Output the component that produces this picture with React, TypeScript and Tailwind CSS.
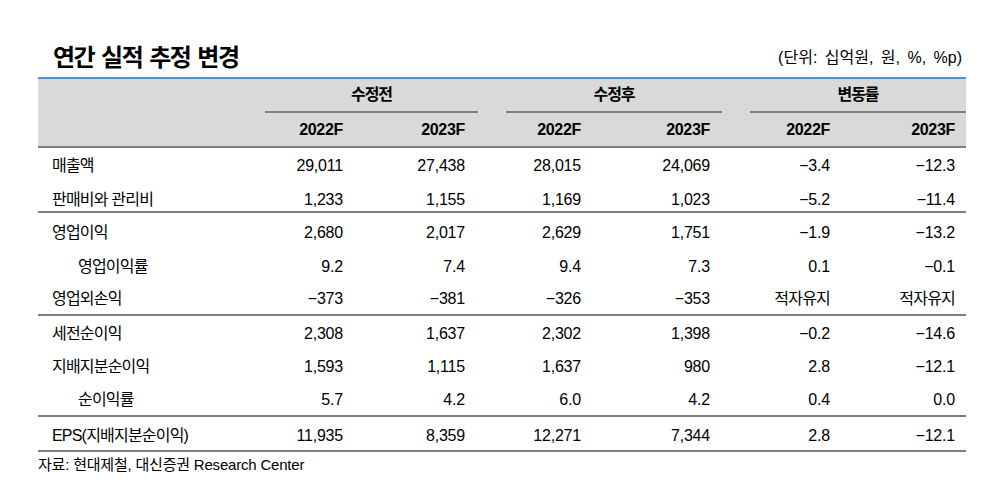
import React from 'react'

type Row = {
  label: string
  values: string[]
  indent?: boolean
  h: string
  pt: string
}

type Section = Row[]

const sections: Section[] = [
  [
    { label: '매출액', values: ['29,011', '27,438', '28,015', '24,069', '−3.4', '−12.3'], h: 'h-[34px]', pt: 'pt-[8px]' },
    { label: '판매비와 관리비', values: ['1,233', '1,155', '1,169', '1,023', '−5.2', '−11.4'], h: 'h-[29px]', pt: 'pt-[8px]' },
  ],
  [
    { label: '영업이익', values: ['2,680', '2,017', '2,629', '1,751', '−1.9', '−13.2'], h: 'h-[34px]', pt: 'pt-[10px]' },
    { label: '영업이익률', values: ['9.2', '7.4', '9.4', '7.3', '0.1', '−0.1'], indent: true, h: 'h-[34px]', pt: 'pt-[10px]' },
    { label: '영업외손익', values: ['−373', '−381', '−326', '−353', '적자유지', '적자유지'], h: 'h-[33px]', pt: 'pt-[8px]' },
  ],
  [
    { label: '세전순이익', values: ['2,308', '1,637', '2,302', '1,398', '−0.2', '−14.6'], h: 'h-[33px]', pt: 'pt-[8px]' },
    { label: '지배지분순이익', values: ['1,593', '1,115', '1,637', '980', '2.8', '−12.1'], h: 'h-[33px]', pt: 'pt-[8px]' },
    { label: '순이익률', values: ['5.7', '4.2', '6.0', '4.2', '0.4', '0.0'], indent: true, h: 'h-[33px]', pt: 'pt-[8px]' },
  ],
  [
    { label: 'EPS(지배지분순이익)', values: ['11,935', '8,359', '12,271', '7,344', '2.8', '−12.1'], h: 'h-[33px]', pt: 'pt-[9px]' },
  ],
]

const cols = 'grid grid-cols-[229px_76px_122px_116px_129px_120px_125px] pr-[11px]'
const hasKorean = (s: string) => /[가-힣]/.test(s)

function DataRow({ row }: { row: Row }) {
  return (
    <div className={`${cols} ${row.h} ${row.pt} items-start leading-[20px]`}>
      <div className={`${row.indent ? 'pl-[40px]' : 'pl-[14px]'} tracking-[-0.8px] whitespace-nowrap`}>
        {row.label}
      </div>
      {row.values.map((v, i) => (
        <div key={i} className={`text-right whitespace-nowrap ${hasKorean(v) ? 'tracking-[-0.8px]' : 'tracking-[-0.2px]'}`}>
          {v}
        </div>
      ))}
    </div>
  )
}

export default function App() {
  return (
    <div className="w-[998px] h-[495px] bg-white text-black font-['Liberation_Sans','Noto_Sans_CJK_KR',sans-serif] text-[16px]">
      <div className="pl-[38px] pt-[41px] w-[966px]">
        <div className="flex h-[30px] items-center justify-between">
          <h1 className="pl-[15px] font-['Noto_Sans_CJK_KR',sans-serif] font-bold text-[24px] tracking-[-1.5px] [word-spacing:3px] leading-[30px]">
            연간 실적 추정 변경
          </h1>
          <span className="pt-[3px] pr-[4px] leading-[20px] [word-spacing:3px]">(단위: 십억원, 원, %, %p)</span>
        </div>

        <div className="mt-[6px] w-[928px] border-t-2 border-[#558ed5]">
          <div className="bg-[#d9d9d9] font-bold border-b-2 border-[#7f7f7f]">
            <div className="grid h-[34px] grid-cols-[227px_213px_28px_216px_28px_216px] leading-[20px]">
              <div />
              <div className="flex items-center justify-center border-b-2 border-[#7f7f7f] tracking-[-1px]">수정전</div>
              <div />
              <div className="flex items-center justify-center border-b-2 border-[#7f7f7f] tracking-[-1px]">수정후</div>
              <div />
              <div className="flex items-center justify-center border-b-2 border-[#7f7f7f] tracking-[-1px]">변동률</div>
            </div>
            <div className={`${cols} h-[33px] items-center leading-[20px]`}>
              <div />
              {['2022F', '2023F', '2022F', '2023F', '2022F', '2023F'].map((y, i) => (
                <div key={i} className="text-right tracking-[-0.3px]">
                  {y}
                </div>
              ))}
            </div>
          </div>

          {sections.map((section, si) => (
            <div key={si} className="border-b-2 border-[#7f7f7f]">
              {section.map((row) => (
                <DataRow key={row.label} row={row} />
              ))}
            </div>
          ))}
        </div>

        <p className="mt-[3px] text-[15px] leading-[20px] tracking-[-0.2px]">
          자료: 현대제철, 대신증권 Research Center
        </p>
      </div>
    </div>
  )
}
